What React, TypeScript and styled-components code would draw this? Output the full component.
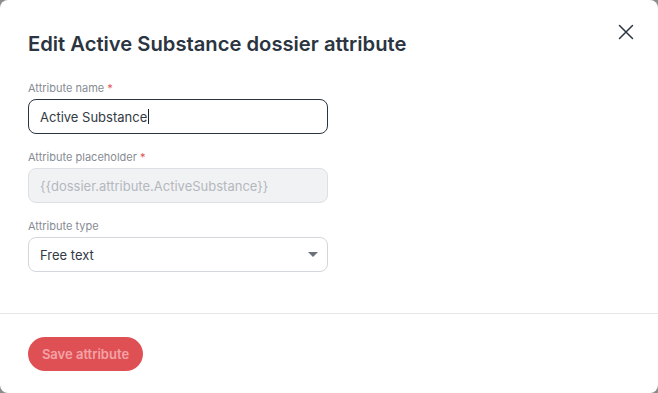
import React from "react";
import styled, { createGlobalStyle } from "styled-components";

const Global = createGlobalStyle`
  html, body { margin: 0; padding: 0; background: #8c8c8c; }
  body { font-family: Inter, "Noto Sans", sans-serif; }
  * { box-sizing: border-box; }
`;

const Modal = styled.div`
  width: 658px;
  height: 393px;
  background: #fff;
  border-radius: 8px;
  display: flex;
  flex-direction: column;
  position: relative;
`;

const Header = styled.div`
  padding: 32px 28px 0 28px;
  display: flex;
  justify-content: space-between;
  align-items: flex-start;
`;

const Title = styled.h2`
  margin: 0;
  font-size: 20.2px;
  line-height: 24px;
  font-weight: 600;
  color: #2b3441;
`;

const CloseButton = styled.button`
  border: 0;
  background: none;
  padding: 0;
  width: 16px;
  height: 16px;
  margin: -8px -4px 0 0;
  display: flex;
  align-items: center;
  justify-content: center;
  cursor: pointer;
`;

const Form = styled.div`
  padding: 24px 28px 0 28px;
  display: flex;
  flex-direction: column;
  gap: 15px;
  flex: 1;
`;

const Field = styled.div`
  display: flex;
  flex-direction: column;
  gap: 3px;
  width: 300px;
`;

const Label = styled.label`
  font-size: 11px;
  line-height: 16px;
  color: #878c94;
`;

const Req = styled.span`
  color: #e0555a;
`;

const Box = styled.div<{ $variant?: "active" | "disabled" | "default" }>`
  height: 35px;
  border-radius: 8px;
  border: 1px solid
    ${(p) =>
      p.$variant === "active" ? "#2b3441" : p.$variant === "disabled" ? "#dcdfe3" : "#d3d6db"};
  background: ${(p) => (p.$variant === "disabled" ? "#f1f2f4" : "#fff")};
  display: flex;
  align-items: center;
  padding: 0 11px;
  font-size: 13px;
  color: ${(p) => (p.$variant === "disabled" ? "#b4b8be" : "#343a43")};
  justify-content: space-between;
`;

const Value = styled.span`
  display: flex;
  align-items: center;
`;

const Caret = styled.span`
  width: 1px;
  height: 15px;
  background: #222;
  margin-left: 1px;
`;

const Arrow = styled.span`
  width: 0;
  height: 0;
  border-left: 5px solid transparent;
  border-right: 5px solid transparent;
  border-top: 5px solid #6b7079;
  margin-right: -2px;
`;

const Footer = styled.div`
  border-top: 1px solid #e6e6e6;
  padding: 23px 28px 22px 28px;
  display: flex;
`;

const SaveButton = styled.button`
  height: 34px;
  width: 115px;
  border: 0;
  border-radius: 17px;
  background: #df5055;
  color: #f3a3a6;
  font-family: Inter, "Noto Sans", sans-serif;
  font-size: 13px;
  font-weight: 600;
  padding: 0;
`;

export default function App() {
  return (
    <>
      <Global />
      <Modal>
        <Header>
          <Title>Edit Active Substance dossier attribute</Title>
          <CloseButton aria-label="Close">
            <svg width="16" height="16" viewBox="0 0 16 16">
              <path d="M1.5 1.5 L14.5 14.5 M14.5 1.5 L1.5 14.5" stroke="#2b3441" strokeWidth="1.5" strokeLinecap="round" />
            </svg>
          </CloseButton>
        </Header>
        <Form>
          <Field>
            <Label>
              Attribute name <Req>*</Req>
            </Label>
            <Box $variant="active">
              <Value>
                Active Substance
                <Caret />
              </Value>
            </Box>
          </Field>
          <Field>
            <Label>
              Attribute placeholder <Req>*</Req>
            </Label>
            <Box $variant="disabled">{"{{dossier.attribute.ActiveSubstance}}"}</Box>
          </Field>
          <Field>
            <Label>Attribute type</Label>
            <Box $variant="default">
              <Value>Free text</Value>
              <Arrow />
            </Box>
          </Field>
        </Form>
        <Footer>
          <SaveButton>Save attribute</SaveButton>
        </Footer>
      </Modal>
    </>
  );
}
